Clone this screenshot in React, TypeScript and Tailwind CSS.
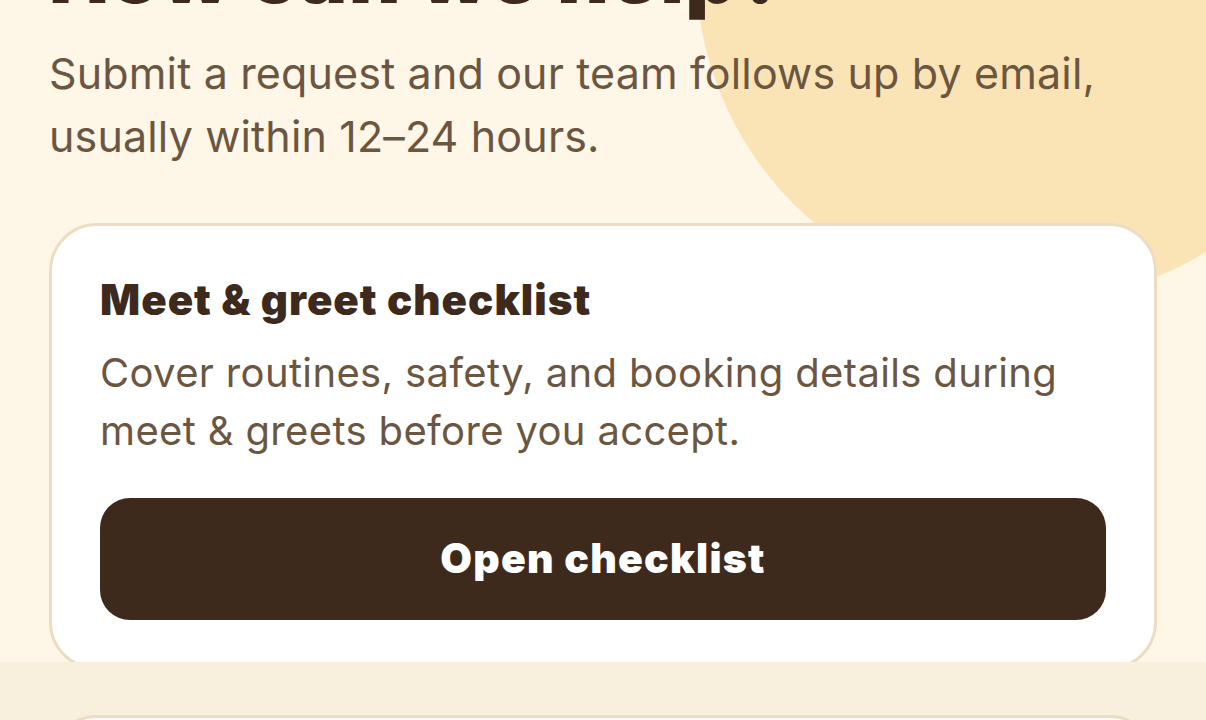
export default function App() {
  return (
    <div className="min-h-screen bg-[#f8efdc] font-['Inter','Noto_Sans',sans-serif] text-[#3d2a1c]">
      <section className="relative overflow-hidden bg-[#fef6e7] px-[49px] pb-0">
        <div className="pointer-events-none absolute left-[696px] top-[-366px] h-[668px] w-[668px] rounded-full bg-[#fae4b6]" />
        <div className="relative">
          <h1 className="mt-[-70px] text-[80px] font-black leading-[88px] tracking-[1.3px] text-[#3d2a1c]">
            How can we help?
          </h1>
          <p className="mt-[24px] text-[43px] leading-[63px] tracking-[0.15px] text-[#6b5642]">
            Submit a request and our team follows up by email, usually within
            12–24 hours.
          </p>
        </div>
        <div className="relative z-10 mt-[55px] mb-[-8px] rounded-[48px] border-[3px] border-[#ecdcc2] bg-white px-[48px] pt-[48px] pb-[47px]">
          <h2 className="text-[42px] font-black leading-[52px] tracking-[1px] text-[#3d2a1c]">
            Meet &amp; greet checklist
          </h2>
          <p className="mt-[18px] text-[40px] leading-[58px] tracking-[0.35px] text-[#6b5642]">
            Cover routines, safety, and booking details during meet &amp;
            greets before you accept.
          </p>
          <button className="mt-[38px] flex h-[122px] w-full items-center justify-center rounded-[30px] bg-[#3d2a1c] text-[41px] font-black tracking-[1.2px] text-white">
            Open checklist
          </button>
        </div>
      </section>
      <section className="px-[49px] pt-[53px]">
        <div className="h-[200px] rounded-[48px] border-[3px] border-[#ecdcc2] bg-white" />
      </section>
    </div>
  );
}
